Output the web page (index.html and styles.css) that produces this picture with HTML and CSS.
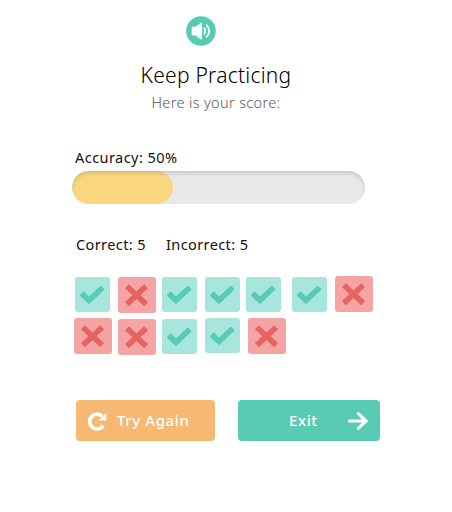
FILE: index.html
```
<!DOCTYPE html>
<html lang="en">
<head>
<meta charset="utf-8">
<title>Score</title>
<link rel="stylesheet" href="styles.css">
</head>
<body>
<svg class="defs" aria-hidden="true">
  <symbol id="check" viewBox="0 0 35 35"><path d="M5.2 17.7 8.1 14.8Q8.7 14.3 9.3 14.8L14 19.5 25.2 8.9Q25.8 8.4 26.4 8.9L29.1 11.7Q29.6 12.3 29.1 12.9L14.7 26.6Q14 27.2 13.3 26.6L5.2 18.9Q4.6 18.3 5.2 17.7Z" fill="#58cbb5"/></symbol>
  <symbol id="cross" viewBox="0 0 38 36"><path d="M8.9 9.3 28.1 27.1M28.1 9.3 8.9 27.1" fill="none" stroke="#e7635f" stroke-width="5.6"/></symbol>
</svg>
<main class="page">
  <header class="head">
    <svg class="sound" viewBox="0 0 30 30"><circle cx="15" cy="15" r="14.8" fill="#58cbb5"/><path d="M6.2 11.2H9.5L15.4 7V23.2L9.5 19H6.2Z" fill="#fff" stroke="#fff" stroke-linejoin="round"/><path d="M18.3 12.3Q20 15 18.3 17.7M20.8 9.3Q25.6 15 20.8 20.7" fill="none" stroke="#fff" stroke-width="1.8" stroke-linecap="round"/></svg>
    <h1 class="title">Keep Practicing</h1>
    <p class="subtitle">Here is your score:</p>
  </header>
  <p class="accuracy">Accuracy: 50%</p>
  <div class="bar"><div class="fill"></div></div>
  <div class="counts"><span>Correct: 5</span><span>Incorrect: 5</span></div>
  <div class="row">
    <svg class="tile ok low gap-first"><use href="#check"/></svg>
    <svg class="tile bad low gap-m"><use href="#cross"/></svg>
    <svg class="tile ok low gap-s"><use href="#check"/></svg>
    <svg class="tile ok low gap-m"><use href="#check"/></svg>
    <svg class="tile ok low gap-s"><use href="#check"/></svg>
    <svg class="tile ok low gap-l"><use href="#check"/></svg>
    <svg class="tile bad gap-m"><use href="#cross"/></svg>
  </div>
  <div class="row">
    <svg class="tile bad"><use href="#cross"/></svg>
    <svg class="tile bad low gap-s"><use href="#cross"/></svg>
    <svg class="tile ok low gap-s"><use href="#check"/></svg>
    <svg class="tile ok gap-m"><use href="#check"/></svg>
    <svg class="tile bad gap-m"><use href="#cross"/></svg>
  </div>
  <div class="actions">
    <button class="btn again"><svg class="redo" viewBox="0 0 20 20"><path d="M16.3 14.4A7.4 7.4 0 1 1 15.2 5.2" fill="none" stroke="#fff" stroke-width="3.8"/><path d="M19.3 2V9.4H11.5Z" fill="#fff"/></svg><span>Try Again</span></button>
    <button class="btn exit"><span>Exit</span><svg class="arrow" viewBox="0 0 22 20"><path d="M2.2 10H18M11.3 2.6 19 10 11.3 17.4" fill="none" stroke="#fff" stroke-width="3.1" stroke-linecap="round"/></svg></button>
  </div>
</main>
</body>
</html>
```
FILE: styles.css
```
* { box-sizing: border-box; }
body { margin: 0; background: #fff; font-family: "Noto Sans", sans-serif; color: #111; }
.defs { display: none; }
.page { width: 452px; height: 512px; padding: 16px 0 0 72px; }
.head { display: flex; flex-direction: column; align-items: center; width: 288px; }
.sound { width: 30px; height: 30px; margin-left: -30px; }
.title { margin: 14px 0 0; font: 350 21px/30px "Noto Sans", sans-serif; letter-spacing: 0.25px; color: #000; white-space: nowrap; }
.subtitle { margin: 1px 0 0; font-size: 14.5px; line-height: 22px; letter-spacing: 0.35px; color: #55585e; font-weight: 350; }
.accuracy { margin: 34px 0 0 3px; font-size: 14.5px; line-height: 20px; letter-spacing: 0.45px; }
.bar { width: 293px; height: 33px; margin-top: 4px; border-radius: 17px; background: #e8e8e8; position: relative; overflow: hidden; }
.bar::after { content: ""; position: absolute; inset: 0; border-radius: 17px; box-shadow: inset 0 3px 4px -1px rgba(0, 0, 0, 0.16); }
.fill { width: 101px; height: 33px; border-radius: 17px; background: #fad67e; }
.counts { display: flex; gap: 20px; margin: 30px 0 22px 4px; font-size: 14.5px; line-height: 20px; letter-spacing: 0.4px; }
.row { display: flex; align-items: flex-start; height: 42px; padding-left: 2px; }
.tile { flex: none; border-radius: 3px; }
.ok { width: 35px; height: 35px; background: #a7e6dc; }
.bad { width: 38px; height: 36px; background: #f3a4a3; }
.low { margin-top: 1px; }
.gap-first { margin-left: 1px; }
.gap-s { margin-left: 6px; }
.gap-m { margin-left: 8px; }
.gap-l { margin-left: 11px; }
.actions { display: flex; gap: 23px; margin: 40px 0 0 4px; }
.btn { display: flex; align-items: center; height: 41px; padding: 0; border: 0; border-radius: 4px; color: #fff; font: 500 15px/20px "Noto Sans", sans-serif; letter-spacing: 0.6px; }
.btn span { margin-top: -1px; }
.again { width: 139px; background: #f6b872; padding-left: 11px; gap: 10px; }
.again span { margin-top: -2px; }
.exit { width: 142px; background: #58cbb5; padding-left: 51px; gap: 29px; }
.redo { width: 20px; height: 20px; }
.arrow { width: 22px; height: 20px; }
```
